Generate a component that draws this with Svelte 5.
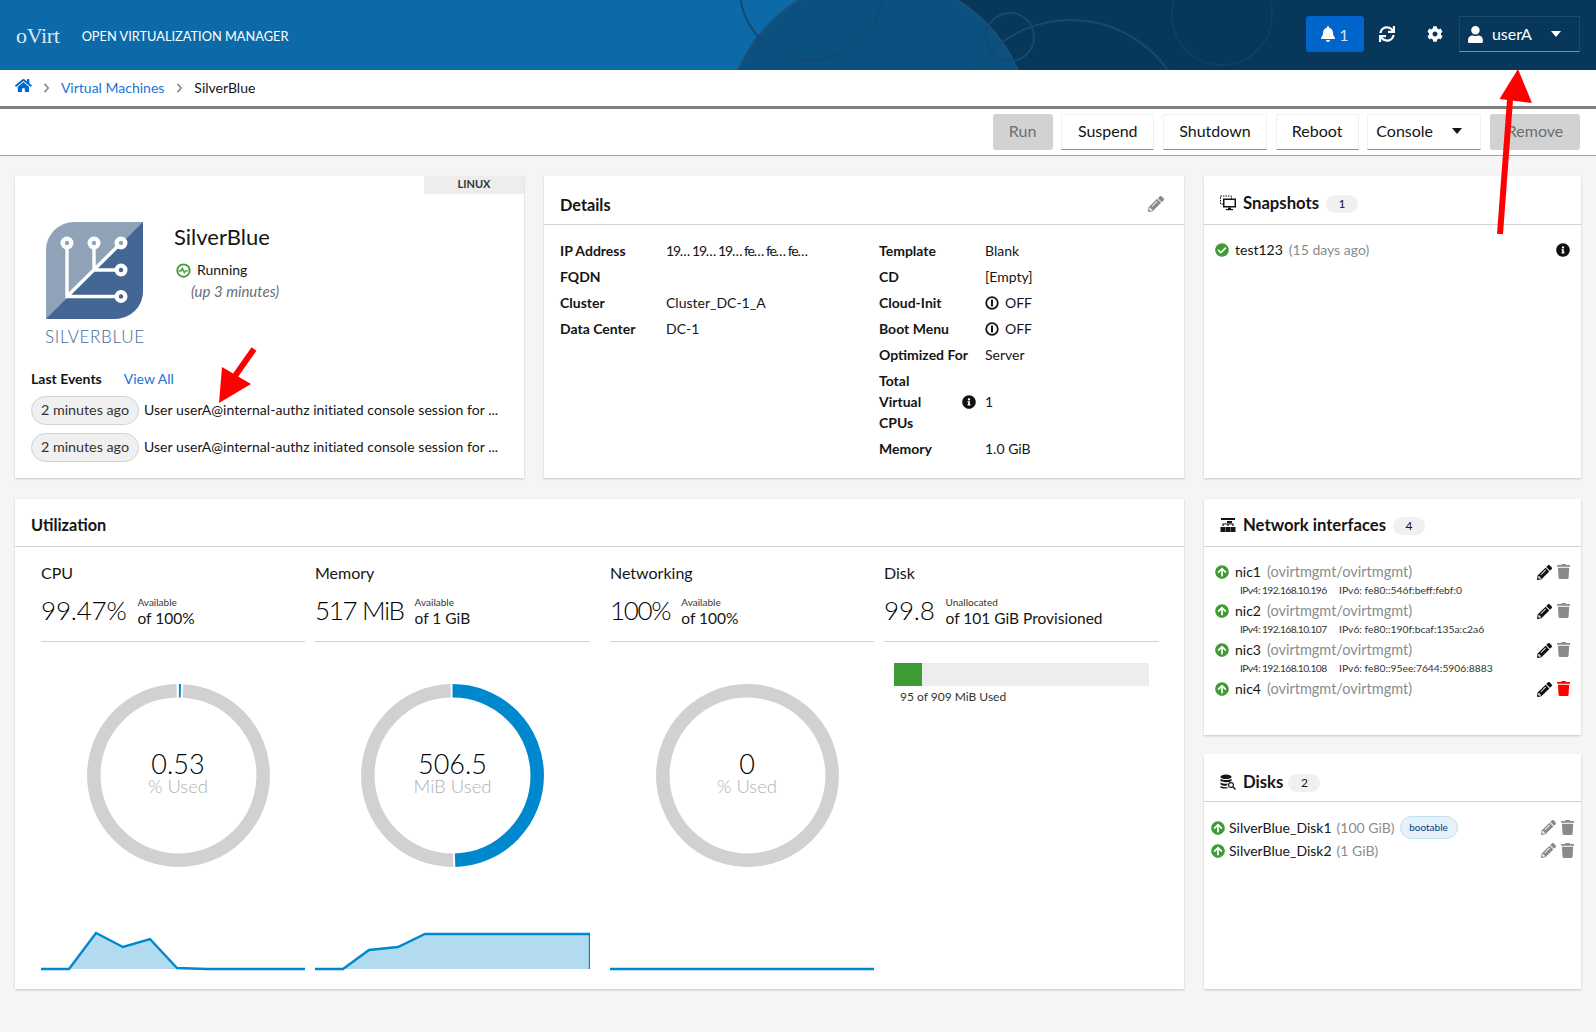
<script>
  const ICON = {
    check: 'M504 256c0 136.967-111.033 248-248 248S8 392.967 8 256 119.033 8 256 8s248 111.033 248 248zM227.314 387.314l184-184c6.248-6.248 6.248-16.379 0-22.627l-22.627-22.627c-6.248-6.249-16.379-6.249-22.628 0L216 308.118l-70.059-70.059c-6.248-6.248-16.379-6.248-22.628 0l-22.627 22.627c-6.248 6.248-6.248 16.379 0 22.627l104 104c6.249 6.249 16.379 6.249 22.628.001z',
    info: 'M256 8C119.043 8 8 119.083 8 256c0 136.997 111.043 248 248 248s248-111.003 248-248C504 119.083 392.957 8 256 8zm0 110c23.196 0 42 18.804 42 42s-18.804 42-42 42-42-18.804-42-42 18.804-42 42-42zm56 254c0 6.627-5.373 12-12 12h-88c-6.627 0-12-5.373-12-12v-24c0-6.627 5.373-12 12-12h12v-64h-12c-6.627 0-12-5.373-12-12v-24c0-6.627 5.373-12 12-12h64c6.627 0 12 5.373 12 12v100h12c6.627 0 12 5.373 12 12v24z',
    up: 'M8 256C8 119 119 8 256 8s248 111 248 248-111 248-248 248S8 393 8 256zm143.6 28.9l72.4-75.5V392c0 13.3 10.7 24 24 24h16c13.3 0 24-10.7 24-24V209.4l72.4 75.5c9.3 9.7 24.8 9.9 34.3.4l10.9-11c9.4-9.4 9.4-24.6 0-33.9L273 107.7c-9.4-9.4-24.6-9.4-33.9 0L106.3 240.4c-9.4 9.4-9.4 24.6 0 33.9l10.9 11c9.6 9.5 25.1 9.3 34.4-.4z',
    pencil: 'M497.9 142.1l-46.1 46.1c-4.7 4.7-12.3 4.7-17 0l-111-111c-4.7-4.7-4.7-12.3 0-17l46.1-46.1c18.7-18.7 49.1-18.7 67.9 0l60.1 60.1c18.8 18.7 18.8 49.1 0 67.9zM284.2 99.8L21.6 362.4.4 483.9c-2.9 16.4 11.4 30.6 27.8 27.8l121.5-21.3 262.6-262.6c4.7-4.7 4.7-12.3 0-17l-111-111c-4.8-4.7-12.4-4.7-17.1 0zM124.1 339.9c-5.5-5.5-5.5-14.3 0-19.8l154-154c5.5-5.5 14.3-5.5 19.8 0s5.5 14.3 0 19.8l-154 154c-5.5 5.5-14.3 5.5-19.8 0zM88 424h48v36.3l-64.5 11.3-31.1-31.1L51.7 376H88v48z',
    trash: 'M432 32H312l-9.4-18.7A24 24 0 0 0 281.1 0H166.8a23.72 23.72 0 0 0-21.4 13.3L136 32H16A16 16 0 0 0 0 48v32a16 16 0 0 0 16 16h416a16 16 0 0 0 16-16V48a16 16 0 0 0-16-16zM53.2 467a48 48 0 0 0 47.9 45h245.8a48 48 0 0 0 47.9-45L416 128H32z',
    bell: 'M224 512c35.32 0 63.97-28.65 63.97-64H160.03c0 35.35 28.65 64 63.97 64zm215.39-149.71c-19.32-20.76-55.47-51.99-55.47-154.29 0-77.7-54.48-139.9-127.94-155.16V32c0-17.67-14.32-32-31.98-32s-31.98 14.33-31.98 32v20.84C118.56 68.1 64.08 130.3 64.08 208c0 102.3-36.15 133.53-55.47 154.29-6 6.45-8.66 14.16-8.61 21.71.11 16.4 12.98 32 32.1 32h383.8c19.12 0 32-15.6 32.1-32 .05-7.55-2.61-15.27-8.61-21.71z',
    user: 'M224 256c70.7 0 128-57.3 128-128S294.7 0 224 0 96 57.3 96 128s57.3 128 128 128zm89.6 32h-16.7c-22.2 10.2-46.9 16-72.9 16s-50.6-5.8-72.9-16h-16.7C60.2 288 0 348.2 0 422.4V464c0 26.5 21.5 48 48 48h352c26.5 0 48-21.5 48-48v-41.6c0-74.2-60.2-134.4-134.4-134.4z',
    cog: 'M487.4 315.7l-42.6-24.6c4.3-23.2 4.3-47 0-70.2l42.6-24.6c4.9-2.8 7.1-8.6 5.5-14-11.1-35.6-30-67.8-54.7-94.6-3.8-4.1-10-5.1-14.8-2.3L380.8 110c-17.9-15.4-38.5-27.3-60.8-35.1V25.8c0-5.6-3.9-10.5-9.4-11.7-36.7-8.2-74.3-7.8-109.2 0-5.5 1.2-9.4 6.1-9.4 11.7V75c-22.2 7.9-42.8 19.8-60.8 35.1L88.7 85.5c-4.9-2.8-11-1.9-14.8 2.3-24.7 26.7-43.6 58.9-54.7 94.6-1.7 5.4.6 11.2 5.5 14L67.3 221c-4.3 23.2-4.3 47 0 70.2l-42.6 24.6c-4.9 2.8-7.1 8.6-5.5 14 11.1 35.6 30 67.8 54.7 94.6 3.8 4.1 10 5.1 14.8 2.3l42.6-24.6c17.9 15.4 38.5 27.3 60.8 35.1v49.2c0 5.6 3.9 10.5 9.4 11.7 36.7 8.2 74.3 7.8 109.2 0 5.5-1.2 9.4-6.1 9.4-11.7v-49.2c22.2-7.9 42.8-19.8 60.8-35.1l42.6 24.6c4.9 2.8 11 1.9 14.8-2.3 24.7-26.7 43.6-58.9 54.7-94.6 1.5-5.5-.7-11.3-5.6-14.1zM256 336c-44.1 0-80-35.9-80-80s35.9-80 80-80 80 35.9 80 80-35.9 80-80 80z',
    sync: 'M440.65 12.57l4 82.77A247.16 247.16 0 0 0 255.83 8C134.73 8 33.91 94.92 12.29 209.82A12 12 0 0 0 24.09 224h49.05a12 12 0 0 0 11.67-9.26 175.91 175.91 0 0 1 317-56.94l-101.46-4.86a12 12 0 0 0-12.57 12v47.41a12 12 0 0 0 12 12H500a12 12 0 0 0 12-12V12a12 12 0 0 0-12-12h-47.37a12 12 0 0 0-11.98 12.57zM255.83 432a175.61 175.61 0 0 1-146-77.8l101.8 4.87a12 12 0 0 0 12.57-12v-47.4a12 12 0 0 0-12-12H12a12 12 0 0 0-12 12V500a12 12 0 0 0 12 12h47.35a12 12 0 0 0 12-12.6l-4.15-82.57A247.17 247.17 0 0 0 255.83 504c121.11 0 221.93-86.92 243.55-201.82a12 12 0 0 0-11.8-14.18h-49.05a12 12 0 0 0-11.67 9.26A175.86 175.86 0 0 1 255.83 432z',
    home: 'M280.37 148.26L96 300.11V464a16 16 0 0 0 16 16l112.06-.29a16 16 0 0 0 15.92-16V368a16 16 0 0 1 16-16h64a16 16 0 0 1 16 16v95.64a16 16 0 0 0 16 16.05L464 480a16 16 0 0 0 16-16V300L295.67 148.26a12.19 12.19 0 0 0-15.3 0zM571.6 251.47L488 182.56V44.05a12 12 0 0 0-12-12h-56a12 12 0 0 0-12 12v72.61L318.47 43a48 48 0 0 0-61 0L4.34 251.47a12 12 0 0 0-1.6 16.9l25.5 31A12 12 0 0 0 45.15 301l235.22-193.74a12.19 12.19 0 0 1 15.3 0L530.9 301a12 12 0 0 0 16.9-1.6l25.5-31a12 12 0 0 0-1.7-16.93z'
  };
  const actions = [
    { label: 'Run', off: true, w: 60 },
    { label: 'Suspend', w: 93 },
    { label: 'Shutdown', w: 104 },
    { label: 'Reboot', w: 83 },
    { label: 'Console', w: 114, caret: true },
    { label: 'Remove', off: true, w: 90 }
  ];
  const leftDetails = [
    ['IP Address', '19… 19… 19… fe… fe… fe…', true],
    ['FQDN', ''],
    ['Cluster', 'Cluster_DC-1_A'],
    ['Data Center', 'DC-1']
  ];
  const nics = [
    { name: 'nic1', v4: '192.168.10.196', v6: 'fe80::546f:beff:febf:0' },
    { name: 'nic2', v4: '192.168.10.107', v6: 'fe80::190f:bcaf:135a:c2a6' },
    { name: 'nic3', v4: '192.168.10.108', v6: 'fe80::95ee:7644:5906:8883' },
    { name: 'nic4', red: true }
  ];
  const disks = [
    { name: 'SilverBlue_Disk1', size: '(100 GiB)', boot: true },
    { name: 'SilverBlue_Disk2', size: '(1 GiB)' }
  ];
  const meters = [
    { title: 'CPU', big: '99.47%', small: 'Available', of: 'of 100%', value: '0.53', unit: '% Used', pct: 0.53, tick: 0.37, narrow: true,
      w: 264, line: '0,38 28,38 55,2 82,16 109,8 136,37 166,38 264,38' },
    { title: 'Memory', big: '517 MiB', small: 'Available', of: 'of 1 GiB', value: '506.5', unit: 'MiB Used', pct: 49.5, tick: 49.5, tight: true,
      w: 275, line: '0,38 28,38 54,19 83,16 110,3 137,3 275,3 275,38' },
    { title: 'Networking', big: '100%', small: 'Available', of: 'of 100%', value: '0', unit: '% Used', pct: 0, narrow: true, shifted: true, tight: true,
      w: 264, line: '0,38 264,38' },
    { title: 'Disk', big: '99.8', small: 'Unallocated', of: 'of 101 GiB Provisioned', disk: true, w: 275 }
  ];
</script>

{#snippet fa(d, vw, size, cls)}
  <svg class={'ic ' + (cls || '')} viewBox={`0 0 ${vw} 512`} height={size} width={(size * vw) / 512}><path d={d} /></svg>
{/snippet}

{#snippet offIcon()}
  <svg class="ic" viewBox="0 0 14 14" width="14" height="14"><circle cx="7" cy="7" r="5.8" fill="none" stroke="#151515" stroke-width="1.8" /><rect x="6" y="3.6" width="2" height="6.8" fill="#151515" /></svg>
{/snippet}

<div class="page">
  <header class="top">
    <svg class="deco" viewBox="0 0 1596 70" preserveAspectRatio="none" aria-hidden="true">
      <rect x="878" y="0" width="718" height="70" fill="#07375a" />
      <circle cx="878" cy="130" r="152" fill="#0a5080" stroke="#1d5175" stroke-width="2" />
      <g fill="none" stroke="#154a70" stroke-width="2">
        <circle cx="811" cy="-11" r="71" />
        <circle cx="1010" cy="37" r="24" />
        <circle cx="1071" cy="138" r="118" />
        <ellipse cx="1222" cy="15" rx="50" ry="50" stroke="#0f3f62" />
      </g>
    </svg>
    <div class="brand"><span class="ovirt">oVirt</span><span class="apptitle">OPEN VIRTUALIZATION MANAGER</span></div>
    <div class="top-right">
      <button class="bell">{@render fa(ICON.bell, 448, 16, 'white')}<span>1</span></button>
      <span class="tico t1">{@render fa(ICON.sync, 512, 16, 'white')}</span>
      <span class="tico t2">{@render fa(ICON.cog, 512, 16, 'white')}</span>
      <div class="userbox">{@render fa(ICON.user, 448, 17, 'white')}<span>userA</span><i class="caret wh"></i></div>
    </div>
  </header>

  <nav class="crumbs">
    {@render fa(ICON.home, 576, 15, 'blue')}
    <svg class="chev c1" viewBox="0 0 8 12" width="7" height="10"><path d="M1.5 1 6 6l-4.5 5" fill="none" stroke="#8a8d90" stroke-width="2" /></svg>
    <a href="#vm">Virtual Machines</a>
    <svg class="chev" viewBox="0 0 8 12" width="7" height="10"><path d="M1.5 1 6 6l-4.5 5" fill="none" stroke="#8a8d90" stroke-width="2" /></svg>
    <span>SilverBlue</span>
  </nav>

  <div class="toolbar">
    {#each actions as a}
      <button class="act" class:off={a.off} class:has-caret={a.caret} style={`width:${a.w}px`}>
        <span>{a.label}</span>{#if a.caret}<i class="caret"></i>{/if}
      </button>
    {/each}
  </div>

  <main class="grid">
    <section class="card vm">
      <div class="os">LINUX</div>
      <div class="vm-top">
        <div class="logo">
          <svg viewBox="0 0 97 97" width="97" height="97">
            <path d="M28 0H97V69a28 28 0 0 1-28 28H0V28A28 28 0 0 1 28 0Z" fill="#8fa2b8" />
            <path d="M97 0V69a28 28 0 0 1-28 28H0Z" fill="#436695" />
            <g stroke="#fff" stroke-width="3.4" fill="none">
              <path d="M21 21V74.5H75M21 74.5 75 21M48 21V47.5M48 48H75" />
            </g>
            {#each [[21, 21, '#8fa2b8'], [48, 21, '#8fa2b8'], [75, 21, '#8fa2b8'], [75, 48, '#436695'], [75, 74.5, '#436695']] as c}
              <circle cx={c[0]} cy={c[1]} r="6.5" fill="#fff" /><circle cx={c[0]} cy={c[1]} r="2.2" fill={c[2]} />
            {/each}
          </svg>
          <div class="logotext">SILVERBLUE</div>
        </div>
        <div class="vm-info">
          <h1>SilverBlue</h1>
          <div class="status">
            <svg class="ic" viewBox="0 0 14 14" width="15" height="15"><circle cx="7" cy="7" r="5.8" fill="none" stroke="#3f9c35" stroke-width="1.7" /><path d="M2.5 7.4h2.2l1.2-2.4 1.9 4 1.1-1.7h2.4" fill="none" stroke="#3f9c35" stroke-width="1.3" /></svg>
            <span>Running</span>
          </div>
          <div class="uptime">(up 3 minutes)</div>
        </div>
      </div>
      <div class="events-head"><b>Last Events</b><a href="#all">View All</a></div>
      {#each [0, 1] as _}
        <div class="event"><span class="pill">2 minutes ago</span><span class="ev-text">User userA@internal-authz initiated console session for ...</span></div>
      {/each}
    </section>

    <section class="card details">
      <div class="card-head dh">
        <h2>Details</h2>
        {@render fa(ICON.pencil, 512, 16, 'gray')}
      </div>
      <div class="det-body">
        <div class="dl">
          {#each leftDetails as d}
            <div class="dt">{d[0]}</div><div class="dd" class:ip={d[2]}>{d[1]}</div>
          {/each}
        </div>
        <div class="dl">
          <div class="dt">Template</div><div class="dd">Blank</div>
          <div class="dt">CD</div><div class="dd">[Empty]</div>
          <div class="dt">Cloud-Init</div><div class="dd flexy">{@render offIcon()}<span>OFF</span></div>
          <div class="dt">Boot Menu</div><div class="dd flexy">{@render offIcon()}<span>OFF</span></div>
          <div class="dt">Optimized For</div><div class="dd">Server</div>
          <div class="dt vcpu"><span>Total<br />Virtual<br />CPUs</span>{@render fa(ICON.info, 512, 14, 'black')}</div><div class="dd mid">1</div>
          <div class="dt">Memory</div><div class="dd">1.0 GiB</div>
        </div>
      </div>
    </section>

    <section class="card snaps">
      <div class="card-head sh">
        <div class="side-title">
          <svg class="ic" viewBox="0 0 16 16" width="16" height="16"><rect x="0.5" y="1" width="11" height="8" fill="none" stroke="#151515" stroke-dasharray="1.5 1" /><rect x="3" y="3.5" width="13" height="9" fill="#151515" /><rect x="4.5" y="5" width="10" height="6" fill="#fff" /><rect x="8" y="12.5" width="3" height="1.5" fill="#151515" /><rect x="6" y="14" width="7" height="1.2" fill="#151515" /></svg>
          <h2>Snapshots</h2><span class="count">1</span>
        </div>
      </div>
      <div class="snap-row">
        {@render fa(ICON.check, 512, 14, 'green')}
        <span class="nm">test123</span><span class="mut">(15 days ago)</span>
        <span class="push">{@render fa(ICON.info, 512, 14, 'black')}</span>
      </div>
    </section>

    <section class="card util">
      <div class="card-head low"><h2>Utilization</h2></div>
      <div class="meters">
        {#each meters as m}
          <div class="meter" class:shifted={m.shifted} style={`width:${m.w}px`}>
            <div class="m-title">{m.title}</div>
            <div class="m-stat">
              <span class="big" class:tight={m.tight}>{m.big}</span>
              <span class="stack"><small>{m.small}</small><span>{m.of}</span></span>
            </div>
            {#if m.disk}
              <div class="bar"><div class="fill" style="width:11%"></div></div>
              <div class="bar-label">95 of 909 MiB Used</div>
            {:else}
              <div class="donut" class:narrow={m.narrow}>
                <svg viewBox="0 0 183 183" width="183" height="183">
                  <g transform="rotate(-90 91.5 91.5)" fill="none" stroke-width="13.5">
                    {#if m.pct > 0}
                      <circle cx="91.5" cy="91.5" r="84.7" pathLength="100" stroke="#d1d1d1" stroke-dasharray={`${100 - m.pct - 0.7} ${m.pct + 0.7}`} stroke-dashoffset={-(m.pct + 0.35)} />
                      <circle cx="91.5" cy="91.5" r="84.7" pathLength="100" stroke="#0088ce" stroke-dasharray={`${m.tick} ${100 - m.tick}`} stroke-dashoffset={-(m.pct - m.tick) / 2} />
                    {:else}
                      <circle cx="91.5" cy="91.5" r="84.7" stroke="#d1d1d1" />
                    {/if}
                  </g>
                </svg>
                <div class="d-center"><div class="d-val">{m.value}</div><div class="d-unit">{m.unit}</div></div>
              </div>
              <svg class="spark" viewBox={`0 0 ${m.w} 40`} width={m.w} height="40">
                <polygon points={m.line + ` ${m.w},38 0,38`} fill="#b3dbf0" />
                <polyline points={m.line} fill="none" stroke="#0088ce" stroke-width="2.4" />
              </svg>
            {/if}
          </div>
        {/each}
      </div>
    </section>

    <div class="side">
      <section class="card nets">
        <div class="card-head low sl">
          <div class="side-title">
            <svg class="ic" viewBox="0 0 16 16" width="16" height="16" fill="#151515"><rect x="1" y="1" width="14" height="2" /><rect x="7" y="4" width="5" height="2.2" /><path d="M3 9V7h10v2M8 7v2" fill="none" stroke="#151515" stroke-width="1.2" /><rect x="0.5" y="10" width="5" height="5" /><rect x="5.7" y="10" width="4.6" height="5" /><rect x="10.5" y="10" width="5" height="5" /></svg>
            <h2>Network interfaces</h2><span class="count">4</span>
          </div>
        </div>
        <div class="nic-list">
          {#each nics as n}
            <div class="nic">
              <div class="nic-row">
                {@render fa(ICON.up, 512, 14, 'green')}
                <span class="nm">{n.name}</span><span class="mut wide">(ovirtmgmt/ovirtmgmt)</span>
                <span class="push rowacts">{@render fa(ICON.pencil, 512, 15, 'black')}{@render fa(ICON.trash, 448, 15, n.red ? 'red up1' : 'gray up1')}</span>
              </div>
              {#if n.v4}
                <div class="nic-sub"><span class="v4">IPv4: {n.v4}</span><span>IPv6: {n.v6}</span></div>
              {/if}
            </div>
          {/each}
        </div>
      </section>

      <section class="card dsk">
        <div class="card-head low dskh">
          <div class="side-title">
            <svg class="ic" viewBox="0 0 16 16" width="16" height="16" fill="#151515"><ellipse cx="6" cy="2.8" rx="5.5" ry="2.3" /><path d="M.5 4.6C2 6.6 10 6.6 11.5 4.6V7C9 8.6 3 8.6.5 7ZM.5 8.4C2.5 10 7 10 8 9.6 7.4 10.3 7.3 11 7.3 11.6 4.5 11.9 2 11.4.5 10.4ZM.5 12C2 13 5 13.4 7.5 13.2L8 14C5 15 2 14.6.5 13.8Z" /><circle cx="11" cy="11" r="2.4" fill="none" stroke="#151515" stroke-width="1.1" /><path d="M12.8 12.8 15.5 15.5" stroke="#151515" stroke-width="1.3" /></svg>
            <h2>Disks</h2><span class="count">2</span>
          </div>
        </div>
        <div class="disk-list">
          {#each disks as d}
            <div class="disk-row">
              {@render fa(ICON.up, 512, 14, 'green')}
              <span class="nm">{d.name}</span><span class="mut">{d.size}</span>
              {#if d.boot}<span class="boot">bootable</span>{/if}
              <span class="push rowacts">{@render fa(ICON.pencil, 512, 15, 'gray')}{@render fa(ICON.trash, 448, 15, 'gray')}</span>
            </div>
          {/each}
        </div>
      </section>
    </div>
  </main>

  <svg class="arrows" viewBox="0 0 1596 1032" width="1596" height="1032" aria-hidden="true">
    <path d="M1500 234 1510 100" stroke="#ff0000" stroke-width="6" fill="none" />
    <polygon points="1518,69 1532,103 1499.5,99" fill="#ff0000" />
    <path d="M254 349 235 376" stroke="#ff0000" stroke-width="6" fill="none" />
    <polygon points="219,403 222,367 251,384" fill="#ff0000" />
  </svg>
</div>

<style>
  :global(body) { margin: 0; background: #f5f5f5; }
  .page {
    position: relative; width: 1596px; min-height: 1032px; background: #f5f5f5; overflow: hidden;
    font-family: Lato, "Noto Sans", sans-serif; font-size: 14px; color: #151515;
  }
  h1, h2 { margin: 0; font-weight: 400; }
  a { color: #1a73d9; text-decoration: none; }
  .ic { display: block; flex: none; }
  .ic.white { fill: #fff; }
  .ic.blue { fill: #06c; }
  .ic.gray { fill: #8a8a8a; }
  .ic.black { fill: #111; }
  .ic.green { fill: #3f9c35; }
  .ic.red { fill: #ff0000; }
  .ic.up1 { margin-top: -1px; }

  .top {
    position: relative; height: 70px; background: #0c6aa8; color: #fff;
    display: flex; align-items: center; justify-content: space-between; padding: 0 16px 0 16px; box-sizing: border-box; overflow: hidden;
  }
  .deco { position: absolute; inset: 0; width: 100%; height: 100%; }
  .brand { position: relative; display: flex; align-items: center; gap: 22px; padding-top: 1px; }
  .ovirt { font-family: "Liberation Serif", serif; font-size: 22px; letter-spacing: -0.3px; color: #dfe9f2; }
  .apptitle { font-size: 12.8px; padding-top: 1px; }
  .top-right { position: relative; display: flex; align-items: center; margin-top: -2px; }
  .bell {
    width: 58px; height: 36px; border: 0; border-radius: 3px; background: #06c; color: #cfe4f7; font: inherit; font-size: 16px;
    display: flex; align-items: center; justify-content: center; gap: 4px; padding: 0;
  }
  .tico { display: block; }
  .t1 { margin: 0 32px 0 15px; }
  .t2 { margin-right: 16px; }
  .userbox {
    width: 121px; height: 36px; box-sizing: border-box; display: flex; align-items: center; padding: 0 18px 0 8px; gap: 9px; font-size: 16px;
    border: 1px solid #1c4a6b; border-bottom-color: #8a8d90;
  }
  .userbox span { flex: 1; padding-bottom: 1px; }
  .caret { display: block; flex: none; width: 0; height: 0; border-left: 5.5px solid transparent; border-right: 5.5px solid transparent; border-top: 6px solid #151515; }
  .caret.wh { border-top-color: #fff; }

  .crumbs { height: 39px; background: #fff; display: flex; align-items: center; padding: 0 0 2px 15px; box-sizing: border-box; border-bottom: 3px solid #808080; }
  .crumbs .chev { margin: 1px 11px 0 12px; }
  .crumbs .chev.c1 { margin: 1px 11px 0 11px; }
  .crumbs .ic { margin-top: -3px; }

  .toolbar {
    height: 46px; background: #fff; border-bottom: 1px solid #a3a3a3; display: flex; justify-content: flex-end;
    align-items: center; gap: 8.7px; padding: 0 16px 0 0; box-sizing: content-box;
  }
  .act {
    height: 36px; box-sizing: border-box; padding: 0 0 3px; background: #fff; font: inherit; font-size: 16px; color: #151515;
    border: 1px solid #f0f0f0; border-bottom-color: #8a8d90; display: flex; align-items: center; justify-content: center;
  }
  .act.has-caret { justify-content: space-between; padding: 0 18px 3px 8px; }
  .act.off { background: #d2d2d2; color: #6a6e73; border: 0; border-radius: 3px; }

  .grid {
    display: grid; grid-template-columns: 509px 640px 377px; column-gap: 20px; row-gap: 21px;
    grid-template-rows: 302px 490px; padding: 20px 0 0 15px;
  }
  .card { position: relative; background: #fff; box-shadow: 0 1px 2px rgba(0, 0, 0, 0.2); box-sizing: border-box; }
  .card-head { height: 48px; display: flex; align-items: center; justify-content: space-between; padding: 0 20px 0 16px; border-bottom: 1px solid #d2d2d2; box-sizing: content-box; }
  .card-head.low { height: 43px; padding-top: 4px; }
  .card-head.dh { height: 40px; padding-top: 8px; }
  .card-head.sh { height: 43px; padding-top: 5px; }
  .card-head.dskh { height: 39px; padding-top: 8px; }
  h2 { font-size: 16.3px; font-weight: 700; }
  .side-title h2 { font-size: 16.7px; }

  .os { position: absolute; top: 0; right: 0; width: 100px; height: 18px; line-height: 16px; text-align: center; background: #ededed; font-size: 11px; font-weight: 700; color: #333; }
  .vm-top { display: flex; padding: 46px 0 0 30px; height: 123px; }
  .logo { width: 100px; }
  .logo svg { display: block; margin-left: 1px; }
  .logotext { font-size: 17px; font-weight: 300; color: #436695; letter-spacing: 0.7px; margin-top: 8px; white-space: nowrap; line-height: 20px; }
  .vm-info { margin-left: 29px; }
  h1 { font-size: 22px; line-height: 30px; margin-top: 0; }
  .status { display: flex; align-items: center; gap: 6px; margin: 8px 0 0 2px; line-height: 20px; }
  .uptime { font-style: italic; font-size: 15px; color: #6a6e73; margin: 1px 0 0 17px; line-height: 20px; }
  .events-head { display: flex; gap: 22px; padding: 24px 0 0 16px; line-height: 20px; margin-bottom: 7px; }
  .event { display: flex; align-items: center; padding-left: 16px; margin-bottom: 8px; }
  .pill { width: 108px; height: 29px; box-sizing: border-box; border: 1px solid #d2d2d2; border-radius: 15px; background: #f0f0f0; display: flex; align-items: center; justify-content: center; color: #333; margin-right: 5px; font-size: 14.3px; padding-bottom: 2px; }
  .ev-text { letter-spacing: 0.05px; padding-bottom: 2px; }

  .det-body { display: grid; padding: 15px 16px 0 16px; grid-template-columns: 319px 1fr; }
  .dl { display: grid; grid-template-columns: 106px 1fr; row-gap: 5px; align-content: start; line-height: 21px; }
  .dt { font-weight: 700; }
  .ip { letter-spacing: -1.2px; word-spacing: 0.5px; }
  .vcpu { display: flex; align-items: center; justify-content: space-between; padding-right: 9px; }
  .mid { align-self: center; }
  .flexy { display: flex; align-items: center; gap: 6px; }

  .side-title { display: flex; align-items: center; }
  .side-title .ic { margin-right: 7px; }
  .count { width: 32px; height: 18px; line-height: 18px; border-radius: 9px; background: #f0f0f0; text-align: center; font-size: 12px; margin-left: 7px; margin-top: 2px; }
  .dskh .count { margin-left: 5px; }
  .nm { margin: 0 6px; }
  .mut { color: #8a8d90; }
  .mut.wide { font-size: 14.5px; }
  .push { margin-left: auto; }
  .snap-row { display: flex; align-items: center; padding: 15px 11px 0 11px; line-height: 20px; }

  .util { grid-column: 1 / 3; }
  .meters { display: flex; gap: 10px; padding-left: 26px; }
  .meter.shifted { margin-left: 10px; }
  .m-title { font-size: 16px; line-height: 24px; padding-top: 14px; }
  .m-stat { height: 52px; padding-bottom: 4px; border-bottom: 1px solid #d2d2d2; display: flex; align-items: center; gap: 11px; box-sizing: content-box; }
  .big { font-size: 26px; font-weight: 300; color: #000; line-height: 30px; letter-spacing: -0.2px; margin-top: -3px; }
  .big.tight { letter-spacing: -1.3px; }
  .stack { display: flex; flex-direction: column; font-size: 15.5px; line-height: 17px; }
  .stack small { font-size: 10px; line-height: 12px; color: #333; margin-bottom: 2px; }
  .donut { position: relative; width: 183px; height: 183px; margin: 42px auto 0; }
  .donut.narrow { left: 5px; }
  .donut svg { display: block; }
  .d-center { position: absolute; inset: 0; display: flex; flex-direction: column; align-items: center; justify-content: center; padding-bottom: 3px; box-sizing: border-box; }
  .d-val { font-size: 27px; font-weight: 300; color: #000; line-height: 24px; }
  .d-unit { font-size: 18.5px; font-weight: 300; line-height: 20px; color: #b0b0b0; }
  .spark { display: block; margin-top: 64px; }
  .bar { height: 23px; margin: 21px 10px 0 10px; background: #ededed; }
  .fill { height: 100%; background: #3f9c35; }
  .bar-label { font-size: 12px; line-height: 18px; color: #333; padding: 2px 0 0 16px; }

  .side { display: flex; flex-direction: column; gap: 19px; }
  .nets { height: 236px; }
  .dsk { flex: 1; }
  .nic-list { padding: 15px 11px 0 11px; }
  .nic { height: 39px; }
  .nic-row { display: flex; align-items: center; line-height: 20px; }
  .nic-sub { font-size: 10.3px; line-height: 16px; padding-left: 25px; color: #333; display: flex; white-space: nowrap; }
  .v4 { width: 99px; flex: none; letter-spacing: -0.6px; }
  .rowacts { display: flex; gap: 5px; }
  .disk-list { padding: 14px 7px 0 7px; }
  .disk-row { display: flex; align-items: center; height: 23px; }
  .disk-row .nm { margin: 0 5px 0 4px; }
  .boot { margin-left: 5px; width: 58px; height: 23px; box-sizing: border-box; line-height: 21px; text-align: center; border: 1px solid #bee1f4; border-radius: 12px; background: #e7f1fa; color: #004080; font-size: 10px; }

  .arrows { position: absolute; top: 0; left: 0; pointer-events: none; }
</style>
